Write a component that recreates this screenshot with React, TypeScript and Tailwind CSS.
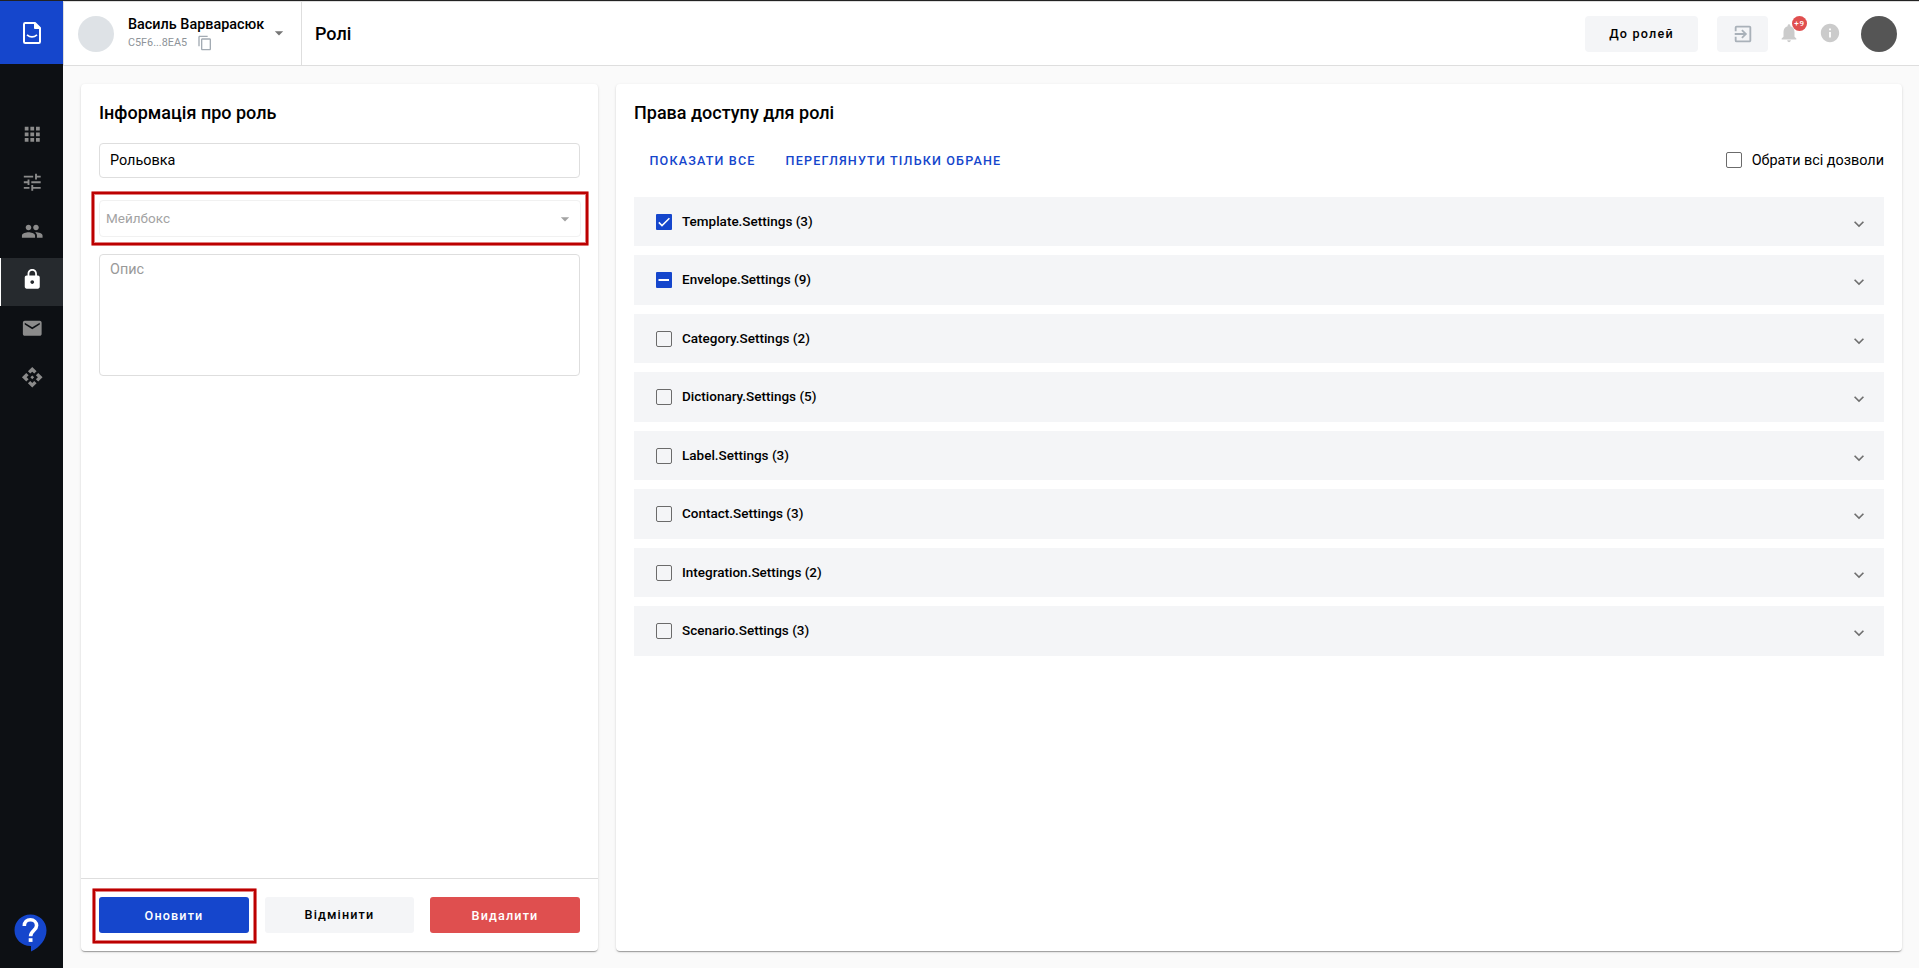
import React from "react";
import {
  MdApi,
  MdApps,
  MdArrowDropDown,
  MdContentCopy,
  MdEmail,
  MdExitToApp,
  MdExpandMore,
  MdInfo,
  MdLock,
  MdNotifications,
  MdPeople,
  MdTune,
} from "react-icons/md";

type CheckState = "on" | "partial" | "off";

const navItems = [
  { id: "apps", Icon: MdApps },
  { id: "tune", Icon: MdTune },
  { id: "people", Icon: MdPeople },
  { id: "roles", Icon: MdLock, active: true },
  { id: "mail", Icon: MdEmail },
  { id: "api", Icon: MdApi },
];

const permissions: { label: string; state: CheckState }[] = [
  { label: "Template.Settings (3)", state: "on" },
  { label: "Envelope.Settings (9)", state: "partial" },
  { label: "Category.Settings (2)", state: "off" },
  { label: "Dictionary.Settings (5)", state: "off" },
  { label: "Label.Settings (3)", state: "off" },
  { label: "Contact.Settings (3)", state: "off" },
  { label: "Integration.Settings (2)", state: "off" },
  { label: "Scenario.Settings (3)", state: "off" },
];

const cardClass =
  "flex flex-col rounded-[4px] bg-white shadow-[0_2px_1px_-1px_rgba(0,0,0,0.2),0_1px_1px_0_rgba(0,0,0,0.14),0_1px_3px_0_rgba(0,0,0,0.12)]";

const highlightClass =
  "rounded-[1px] border border-[#dc7070] shadow-[inset_0_0_0_2px_#bc0000,inset_0_0_0_3px_#e08080]";

function Checkbox({ state }: { state: CheckState }) {
  if (state === "off") {
    return <span className="size-4 shrink-0 rounded-[2px] border border-[#6b6b6b]" />;
  }
  return (
    <span className="flex size-4 shrink-0 items-center justify-center rounded-[1px] bg-[#1546cc]">
      <svg viewBox="0 0 16 16" className="size-4" fill="none" stroke="#fff">
        {state === "on" ? (
          <path d="M2.8 8.4 6 11.6 13.4 4.2" strokeWidth="1.5" />
        ) : (
          <path d="M2.5 8h10.5" strokeWidth="2" />
        )}
      </svg>
    </span>
  );
}

function Sidebar() {
  return (
    <aside className="flex w-[63px] shrink-0 flex-col bg-[#0d1014]">
      <div className="flex h-[63px] items-center justify-center bg-[#1546cc]">
        <svg viewBox="0 0 18 22" className="mt-px ml-px h-[22px] w-[18px]" fill="none" stroke="#fff">
          <path d="M1 2.2Q1 1 2.2 1H12l5 5v13.800q0 1.200-1.200 1.200H2.200Q1 21 1 19.800Z" strokeWidth="2" strokeLinejoin="round" />
          <path d="M11.500 1v5.500H17Z" fill="#fff" strokeWidth="1" />
          <path d="M4 12.800q5 4.200 10 0" strokeWidth="1.700" />
        </svg>
      </div>
      <nav className="mt-12 flex flex-1 flex-col">
        {navItems.map(({ id, Icon, active }) => (
          <div
            key={id}
            className={
              active
                ? "flex h-[48.6px] items-center justify-center border-l border-white bg-[#262a2e] pb-[5px] text-white"
                : "flex h-[48.6px] items-center justify-center border-l border-transparent pb-[5px] text-[#8b8b8b]"
            }
          >
            <Icon className="size-[22.5px]" />
          </div>
        ))}
      </nav>
      <div className="pb-[16px] pl-[14px]">
        <svg viewBox="0 0 33 38" className="h-[38px] w-[33px]">
          <path d="M16.500 0.500C7.500 0.500 0.500 7.500 0.500 16.200s7 15.800 16 15.800h0.500v5.500C26 33 32.500 25.500 32.500 16.200 32.500 7.500 25.500 0.500 16.500 0.500Z" fill="#1546cc" />
          <path d="M10.300 12c0-4 2.700-6.200 6.100-6.200 3.500 0 6.200 2.500 6.200 5.800 0 4.800-6 5.200-6 10.700" fill="none" stroke="#fff" strokeWidth="3.600" />
          <rect x="14.700" y="24.200" width="3.800" height="3.700" fill="#fff" />
        </svg>
      </div>
    </aside>
  );
}

function Header() {
  return (
    <header className="flex h-[65px] shrink-0 border-t border-b border-l border-[#dedede] bg-white">
      <div className="flex w-[238px] items-start border-r border-[#dedede] pt-[14px] pl-[14px]">
        <span className="size-9 rounded-full bg-[#dee2e6]" />
        <div className="ml-[14px] flex flex-col">
          <span className="text-[14.4px] leading-[18px] font-medium whitespace-nowrap">Василь Варварасюк</span>
          <span className="-mt-px flex items-center">
            <span className="pt-px text-[10.8px] leading-[18px] text-[#8e9399]">C5F6...8EA5</span>
            <MdContentCopy className="ml-[10px] size-4 text-[#a3abb3]" />
          </span>
        </div>
        <MdArrowDropDown className="mt-[7px] ml-[5px] size-[20px] text-[#757575]" />
      </div>
      <h1 className="flex flex-1 items-center pl-[13px] text-[18px] font-medium">Ролі</h1>
      <div className="flex items-start pt-[14px] pr-[22px]">
        <button className="h-9 w-[113px] rounded-[4px] bg-[#f4f5f7] text-[12.600px] font-medium tracking-[1.2px]">До ролей</button>
        <button className="ml-[19px] flex h-9 w-[51px] items-center justify-center rounded-[4px] bg-[#f4f5f7] text-[#a9b1b9]">
          <MdExitToApp className="size-[22px]" />
        </button>
        <span className="relative ml-[10px] mt-[6px] text-[#cbcbcb]">
          <MdNotifications className="size-[22px]" />
          <span className="absolute -top-[6px] left-[14px] flex size-[15px] items-center justify-center rounded-full bg-[#e04f4f] text-[8px] font-medium tracking-[0.8px] text-white">
            +9
          </span>
        </span>
        <MdInfo className="mt-[6px] ml-[19px] size-[22px] text-[#cbcbcb]" />
        <span className="ml-[20px] size-9 rounded-full bg-[#555555]" />
      </div>
    </header>
  );
}

function RoleForm() {
  return (
    <section className={`${cardClass} w-[517px] shrink-0`}>
      <div className="flex flex-1 flex-col px-[18px]">
        <h2 className="mt-[15px] text-[18px] leading-[27px] font-medium">Інформація про роль</h2>
        <div className="mt-[17px] flex h-[35px] items-center rounded-[4px] border border-[#dedede] pl-[10px] text-[14.4px]">Рольовка</div>
        <div className={`${highlightClass} mt-[13px] -mr-[9px] -ml-[8px] flex h-[55px] px-[7px] py-[8px]`}>
          <div className="flex flex-1 items-center justify-between rounded-[4px] border border-[#f1f1f1] pr-[5px] pl-[6px] text-[13.500px] text-[#a3a3a3]">
            <span>Мейлбокс</span>
            <MdArrowDropDown className="size-[20px]" />
          </div>
        </div>
        <div className="mt-[8px] h-[122px] rounded-[4px] border border-[#dedede] pt-[4px] pl-[10px] text-[14.4px] leading-[22px] text-[#999999]">Опис</div>
      </div>
      <div className="flex h-[73px] items-start border-t border-[#dedede] pt-[9px] pl-[11px] text-[12.600px] font-medium tracking-[1.15px]">
        <div className={`${highlightClass} flex h-[56px] w-[165px] p-[6px] pt-[8px]`}>
          <button className="h-9 w-[150px] rounded-[3px] bg-[#1546cc] pt-[2px] text-white">Оновити</button>
        </div>
        <button className="mt-[9px] ml-[8px] h-9 w-[149px] rounded-[3px] bg-[#f4f5f7]">Відмінити</button>
        <button className="mt-[9px] ml-[16px] h-9 w-[150px] rounded-[3px] bg-[#df4f4f] pt-[2px] text-white">Видалити</button>
      </div>
    </section>
  );
}

function PermissionsPanel() {
  return (
    <section className={`${cardClass} flex-1 px-[18px]`}>
      <h2 className="mt-[15px] text-[18px] leading-[27px] font-medium">Права доступу для ролі</h2>
      <div className="mt-[16px] flex h-[37px] items-center pl-[15.5px]">
        <span className="pt-[2px] text-[12.600px] font-medium tracking-[1.15px] text-[#1546cc]">ПОКАЗАТИ ВСЕ</span>
        <span className="ml-[30px] pt-[2px] text-[12.600px] font-medium tracking-[1.15px] text-[#1546cc]">ПЕРЕГЛЯНУТИ ТІЛЬКИ ОБРАНЕ</span>
        <label className="ml-auto flex items-center gap-[9.5px] text-[14.4px]">
          <Checkbox state="off" />
          Обрати всі дозволи
        </label>
      </div>
      <div className="mt-[17.9px] flex flex-col gap-[9px]">
        {permissions.map(({ label, state }) => (
          <div key={label} className="flex h-[49.500px] items-center bg-[#f4f5f7] pr-[15.5px] pl-[22px]">
            <Checkbox state={state} />
            <span className="ml-[10px] flex-1 pb-[2px] text-[13.500px] font-medium">{label}</span>
            <MdExpandMore className="mt-1 size-[20px] text-[#6f6f6f]" />
          </div>
        ))}
      </div>
    </section>
  );
}

export default function App() {
  return (
    <div className="flex h-[968px] w-[1919px] overflow-hidden border-t border-[#222222] bg-[#fafafa] font-['Roboto',sans-serif] text-black">
      <Sidebar />
      <div className="flex min-w-0 flex-1 flex-col">
        <Header />
        <main className="flex min-h-0 flex-1 gap-[18px] pt-[18px] pr-[17px] pb-[17px] pl-[18px]">
          <RoleForm />
          <PermissionsPanel />
        </main>
      </div>
    </div>
  );
}
